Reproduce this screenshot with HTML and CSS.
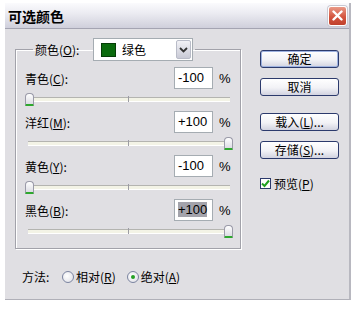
FILE: index.html
```html
<!DOCTYPE html>
<html lang="zh-CN">
<head>
    <meta charset="UTF-8">
    <title>可选颜色</title>
    <link rel="stylesheet" href="styles.css">
</head>
<body>
    <div class="window">
        <div class="titlebar">
            <span class="title">可选颜色</span>
            <span class="close-btn">
                <svg width="11" height="11" viewBox="0 0 11 11"><path d="M1.5 1.5 L9.5 9.5 M9.5 1.5 L1.5 9.5" stroke="#fff" stroke-width="2.4" stroke-linecap="round"/></svg>
            </span>
        </div>

        <div class="content">
            <div class="left-col">
                <fieldset class="group">
                    <legend class="group-head">
                        <span class="label">颜色(<u>O</u>):</span>
                        <span class="dropdown">
                            <span class="swatch"></span>
                            <span class="dd-text">绿色</span>
                            <span class="dd-arrow">
                                <svg width="9" height="6" viewBox="0 0 9 6"><path d="M1 1 L4.5 4.5 L8 1" fill="none" stroke="#333" stroke-width="1.8"/></svg>
                            </span>
                        </span>
                    </legend>

                    <div class="rows">
                        <div class="row">
                            <div class="row-top">
                                <span class="row-label">青色(<u>C</u>):</span>
                                <span class="num-box">-100</span>
                                <span class="pct">%</span>
                            </div>
                            <div class="slider">
                                <span class="track"></span>
                                <span class="tick"></span>
                                <span class="thumb at-min"></span>
                            </div>
                        </div>
                        <div class="row">
                            <div class="row-top">
                                <span class="row-label">洋红(<u>M</u>):</span>
                                <span class="num-box">+100</span>
                                <span class="pct">%</span>
                            </div>
                            <div class="slider">
                                <span class="track"></span>
                                <span class="tick"></span>
                                <span class="thumb at-max"></span>
                            </div>
                        </div>
                        <div class="row">
                            <div class="row-top">
                                <span class="row-label">黄色(<u>Y</u>):</span>
                                <span class="num-box">-100</span>
                                <span class="pct">%</span>
                            </div>
                            <div class="slider">
                                <span class="track"></span>
                                <span class="tick"></span>
                                <span class="thumb at-min"></span>
                            </div>
                        </div>
                        <div class="row">
                            <div class="row-top">
                                <span class="row-label">黑色(<u>B</u>):</span>
                                <span class="num-box"><span class="sel">+100</span></span>
                                <span class="pct">%</span>
                            </div>
                            <div class="slider">
                                <span class="track"></span>
                                <span class="tick"></span>
                                <span class="thumb at-max"></span>
                            </div>
                        </div>
                    </div>
                </fieldset>

                <div class="method">
                    <span class="method-label">方法:</span>
                    <span class="radio"></span>
                    <span class="radio-text">相对(<u>R</u>)</span>
                    <span class="radio checked"></span>
                    <span class="radio-text">绝对(<u>A</u>)</span>
                </div>
            </div>

            <div class="side">
                <button class="btn default">确定</button>
                <button class="btn">取消</button>
                <button class="btn gap-more">载入(<u>L</u>)...</button>
                <button class="btn">存储(<u>S</u>)...</button>
                <div class="preview">
                    <span class="checkbox">
                        <svg width="9" height="9" viewBox="0 0 9 9"><path d="M1 4.5 L3.5 7 L8 1.5" fill="none" stroke="#21a121" stroke-width="2"/></svg>
                    </span>
                    <span>预览(<u>P</u>)</span>
                </div>
            </div>
        </div>
    </div>
</body>
</html>
```

FILE: styles.css
```css
body {
    margin: 0;
    background-color: #fff;
    font-family: "Noto Sans CJK SC", "Liberation Sans", sans-serif;
    font-size: 12px;
    color: #000;
}

u {
    text-decoration: underline;
    text-underline-offset: 1px;
}

.window {
    margin: 3px 0 0 5px;
    width: 346px;
    height: 297px;
    box-sizing: border-box;
    background-color: #e0dfe3;
    border-right: 2px solid #b8b8c0;
    border-bottom: 1px solid #b0b0b8;
    display: flex;
    flex-direction: column;
}

.titlebar {
    height: 25px;
    flex: none;
    display: flex;
    align-items: center;
    justify-content: space-between;
    padding: 0 2px 0 3px;
    background: linear-gradient(#fbfbfd, #ececf2 40%, #cfcfdb);
    border-bottom: 1px solid #a4a4b2;
}

.title {
    font-size: 14px;
    font-weight: bold;
    letter-spacing: 0;
}

.close-btn {
    width: 19px;
    height: 20px;
    box-sizing: border-box;
    border: 1px solid #fff;
    border-radius: 3px;
    background: linear-gradient(#e99a88, #d4553f 55%, #c0402c);
    box-shadow: 0 0 0 1px #c9c9d2;
    display: flex;
    align-items: center;
    justify-content: center;
}

.content {
    display: flex;
}

.left-col {
    padding: 9px 0 0 10px;
}

/* group box */
.group {
    margin: 0;
    padding: 6px 0 5px 0;
    width: 226px;
    box-sizing: border-box;
    border: 1px solid #a2a2aa;
    box-shadow: 1px 1px 0 #fff, inset 1px 1px 0 #fff;
}

.group-head {
    margin-left: 17px;
    padding: 0 2px;
    display: flex;
    align-items: center;
}

.label {
    width: 58px;
}

.dropdown {
    width: 100px;
    height: 23px;
    box-sizing: border-box;
    border: 1px solid #a5acb2;
    background-color: #fff;
    display: flex;
    align-items: center;
}

.swatch {
    width: 13px;
    height: 12px;
    margin-left: 7px;
    background-color: #0b6b0e;
    border: 1px solid #063d07;
}

.dd-text {
    margin-left: 6px;
    flex: 1;
}

.dd-arrow {
    width: 15px;
    height: 19px;
    margin-right: 1px;
    box-sizing: border-box;
    border: 1px solid #b9bcc8;
    border-radius: 2px;
    background: linear-gradient(#f2f2f6, #c9cad6);
    display: flex;
    align-items: center;
    justify-content: center;
}

.rows {
    padding-left: 9px;
}

.row-top {
    height: 22px;
    display: flex;
    align-items: center;
}

.row-label {
    width: 149px;
}

.num-box {
    width: 39px;
    height: 22px;
    box-sizing: border-box;
    border: 1px solid #a5acb2;
    background-color: #fff;
    padding-left: 3px;
    font-family: "Liberation Sans", sans-serif;
    font-size: 13px;
    line-height: 20px;
}

.sel {
    background-color: #a3a3ab;
}

.pct {
    margin-left: 6px;
    font-family: "Liberation Sans", sans-serif;
    font-size: 13px;
}

/* slider */
.slider {
    position: relative;
    width: 208px;
    height: 13px;
    margin: 4px 0 5px 0;
}

.track {
    position: absolute;
    left: 3px;
    right: 3px;
    top: 4px;
    height: 3px;
    background-color: #f3f3e6;
    border-top: 1px solid #b4b4b0;
    border-bottom: 1px solid #fff;
}

.tick {
    position: absolute;
    left: 103px;
    top: 3px;
    width: 1px;
    height: 6px;
    background-color: #9c9ca4;
}

.thumb {
    position: absolute;
    top: 0;
    width: 9px;
    height: 13px;
    box-sizing: border-box;
    border: 1px solid #9a9aa8;
    border-bottom: 2px solid #2ea82e;
    border-radius: 4px 4px 1px 1px;
    background: linear-gradient(#ffffff, #dcdce4);
}

.thumb.at-min {
    left: 0;
}

.thumb.at-max {
    right: 0;
}

/* method */
.method {
    margin: 19px 0 0 7px;
    height: 17px;
    display: flex;
    align-items: center;
}

.method-label {
    width: 40px;
}

.radio {
    width: 12px;
    height: 12px;
    box-sizing: border-box;
    border: 1px solid #7b84a0;
    border-radius: 50%;
    background: radial-gradient(circle at 40% 40%, #fff, #dcdce4);
    margin-right: 2px;
    display: flex;
    align-items: center;
    justify-content: center;
}

.radio.checked::after {
    content: "";
    width: 4px;
    height: 4px;
    border-radius: 50%;
    background-color: #24a024;
}

.radio-text {
    margin-right: 11px;
}

/* side buttons */
.side {
    margin: 21px 0 0 19px;
    width: 79px;
    display: flex;
    flex-direction: column;
}

.btn {
    height: 18px;
    margin-bottom: 10px;
    padding: 0;
    font-family: inherit;
    font-size: 12px;
    line-height: 14px;
    color: #000;
    border: 1px solid #2c3a6c;
    border-radius: 3px;
    background: linear-gradient(#ffffff, #f2f2f6 55%, #d2d3e0);
}

.btn.default {
    box-shadow: inset 0 0 0 1px #9eb2e0;
}

.btn.gap-more {
    margin-top: 7px;
}

.preview {
    margin-top: 6px;
    display: flex;
    align-items: center;
}

.checkbox {
    width: 11px;
    height: 11px;
    box-sizing: border-box;
    border: 1px solid #2c3a6c;
    background-color: #fff;
    margin-right: 3px;
    display: flex;
    align-items: center;
    justify-content: center;
}
```
